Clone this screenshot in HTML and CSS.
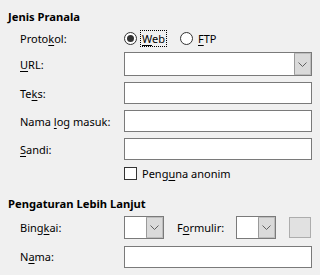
FILE: index.html
```html
<!DOCTYPE html>
<html>
<head>
    <meta charset="UTF-8">
    <title>Pranala</title>
    <link rel="stylesheet" href="styles.css">
</head>
<body>
    <div class="title t1">Jenis Pranala</div>
    <div class="row h21">
        <span class="lbl">Proto<u>k</u>ol:</span>
        <span class="radio on"></span><span class="opt focus"><u>W</u>eb</span>
        <span class="radio"></span><span class="opt"><u>F</u>TP</span>
    </div>
    <div class="row h30">
        <span class="lbl"><u>U</u>RL:</span>
        <div class="combo wide"><div class="combo-txt"></div><div class="combo-btn"><svg width="9" height="5" viewBox="0 0 9 5"><path d="M0.5 0.5 L4.5 4.5 L8.5 0.5" fill="none" stroke="#606060"/></svg></div></div>
    </div>
    <div class="row h28">
        <span class="lbl">Te<u>k</u>s:</span>
        <div class="inp"></div>
    </div>
    <div class="row h28">
        <span class="lbl">Nama <u>l</u>og masuk:</span>
        <div class="inp"></div>
    </div>
    <div class="row h28">
        <span class="lbl"><u>S</u>andi:</span>
        <div class="inp"></div>
    </div>
    <div class="row h21">
        <span class="lbl"></span>
        <span class="check"></span><span class="opt">Peng<u>u</u>na anonim</span>
    </div>
    <div class="title t2">Pengaturan Lebih Lanjut</div>
    <div class="row h23">
        <span class="lbl">Bing<u>k</u>ai:</span>
        <div class="combo small"><div class="combo-txt"></div><div class="combo-btn"><svg width="9" height="5" viewBox="0 0 9 5"><path d="M0.5 0.5 L4.5 4.5 L8.5 0.5" fill="none" stroke="#606060"/></svg></div></div>
        <span class="lbl2">F<u>o</u>rmulir:</span>
        <div class="combo small"><div class="combo-txt"></div><div class="combo-btn"><svg width="9" height="5" viewBox="0 0 9 5"><path d="M0.5 0.5 L4.5 4.5 L8.5 0.5" fill="none" stroke="#606060"/></svg></div></div>
        <div class="btn-off"></div>
    </div>
    <div class="row h23 mt6">
        <span class="lbl">N<u>a</u>ma:</span>
        <div class="inp"></div>
    </div>
</body>
</html>
```

FILE: styles.css
```css
body {
    margin: 0;
    padding: 0 8px;
    background: #f0f0f0;
    font-family: "Noto Sans", sans-serif;
    font-size: 11px;
    color: #000;
}

u {
    text-decoration-thickness: 1px;
    text-underline-offset: 2px;
}

.title {
    font-weight: bold;
    font-size: 11.2px;
    line-height: 22px;
    height: 22px;
}

.t1 {
    padding-top: 6px;
}

.t2 {
    padding-top: 8px;
    line-height: 24px;
    height: 24px;
}

.row {
    display: flex;
    align-items: center;
    padding-left: 12px;
}

.h21 { height: 21px; }
.h23 { height: 23px; }
.h28 { height: 28px; }
.h30 { height: 30px; }
.mt6 { margin-top: 6px; }

.lbl {
    width: 104px;
    flex: none;
}

.lbl2 {
    margin: 0 0 0 13px;
    width: 59px;
}

.radio {
    width: 13px;
    height: 13px;
    box-sizing: border-box;
    border: 1px solid #333;
    border-radius: 50%;
    background: #fff;
    display: flex;
    align-items: center;
    justify-content: center;
    flex: none;
}

.radio.on::after {
    content: "";
    width: 7px;
    height: 7px;
    border-radius: 50%;
    background: #333;
}

.check {
    width: 13px;
    height: 13px;
    box-sizing: border-box;
    border: 1px solid #333;
    background: #fff;
    flex: none;
}

.opt {
    margin-left: 3px;
    padding: 0 1px;
    line-height: 15px;
    border: 1px solid transparent;
    margin-right: 13px;
}

.focus {
    border: 1px dotted #000;
}

.inp {
    width: 188px;
    height: 22px;
    box-sizing: border-box;
    border: 1px solid #7a7a7a;
    background: #fff;
}

.combo {
    display: flex;
    height: 24px;
    box-sizing: border-box;
    border: 1px solid #7a7a7a;
    background: #fff;
}

.combo.wide { width: 188px; }
.combo.small { width: 40px; height: 23px; }

.combo-txt {
    flex: 1;
}

.combo-btn {
    width: 17px;
    box-sizing: border-box;
    border: 1px solid #bdbdbd;
    border-left-color: #9a9a9a;
    background: #dadada;
    display: flex;
    align-items: center;
    justify-content: center;
}

.btn-off {
    width: 22px;
    height: 21px;
    box-sizing: border-box;
    margin-left: 13px;
    border: 1px solid #adadad;
    background: #e1e1e1;
}
```
